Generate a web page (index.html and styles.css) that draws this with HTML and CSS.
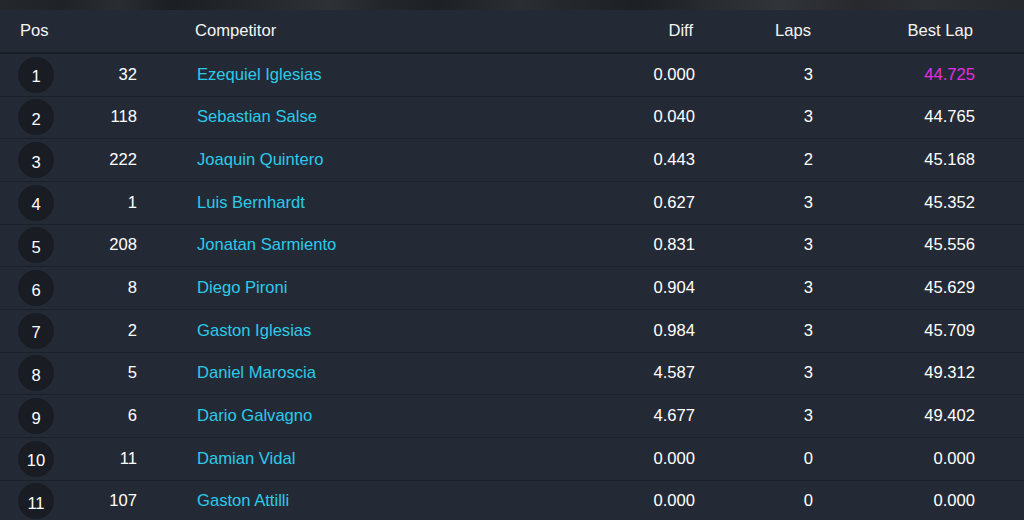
FILE: index.html
```html
<!DOCTYPE html>
<html lang="es">
<head>
<meta charset="utf-8">
<title>Clasificación</title>
<link rel="stylesheet" href="styles.css">
</head>
<body>
<div class="banner"></div>
<div class="board">
  <div class="row head">
    <div class="h-pos">Pos</div>
    <div></div>
    <div class="h-name">Competitor</div>
    <div class="h-r">Diff</div>
    <div class="h-r">Laps</div>
    <div class="h-r">Best Lap</div>
  </div>
  <div class="row"><div class="pos"><span class="badge">1</span></div><div class="num">32</div><div class="name">Ezequiel Iglesias</div><div class="r">0.000</div><div class="r">3</div><div class="r best">44.725</div></div>
  <div class="row"><div class="pos"><span class="badge">2</span></div><div class="num">118</div><div class="name">Sebastian Salse</div><div class="r">0.040</div><div class="r">3</div><div class="r">44.765</div></div>
  <div class="row"><div class="pos"><span class="badge">3</span></div><div class="num">222</div><div class="name">Joaquin Quintero</div><div class="r">0.443</div><div class="r">2</div><div class="r">45.168</div></div>
  <div class="row"><div class="pos"><span class="badge">4</span></div><div class="num">1</div><div class="name">Luis Bernhardt</div><div class="r">0.627</div><div class="r">3</div><div class="r">45.352</div></div>
  <div class="row"><div class="pos"><span class="badge">5</span></div><div class="num">208</div><div class="name">Jonatan Sarmiento</div><div class="r">0.831</div><div class="r">3</div><div class="r">45.556</div></div>
  <div class="row"><div class="pos"><span class="badge">6</span></div><div class="num">8</div><div class="name">Diego Pironi</div><div class="r">0.904</div><div class="r">3</div><div class="r">45.629</div></div>
  <div class="row"><div class="pos"><span class="badge">7</span></div><div class="num">2</div><div class="name">Gaston Iglesias</div><div class="r">0.984</div><div class="r">3</div><div class="r">45.709</div></div>
  <div class="row"><div class="pos"><span class="badge">8</span></div><div class="num">5</div><div class="name">Daniel Maroscia</div><div class="r">4.587</div><div class="r">3</div><div class="r">49.312</div></div>
  <div class="row"><div class="pos"><span class="badge">9</span></div><div class="num">6</div><div class="name">Dario Galvagno</div><div class="r">4.677</div><div class="r">3</div><div class="r">49.402</div></div>
  <div class="row"><div class="pos"><span class="badge">10</span></div><div class="num">11</div><div class="name">Damian Vidal</div><div class="r">0.000</div><div class="r">0</div><div class="r">0.000</div></div>
  <div class="row"><div class="pos"><span class="badge">11</span></div><div class="num">107</div><div class="name">Gaston Attilli</div><div class="r">0.000</div><div class="r">0</div><div class="r">0.000</div></div>
</div>
</body>
</html>
```

FILE: styles.css
```css
html, body {
  margin: 0;
  padding: 0;
  background: #242a35;
  overflow: hidden;
}

body {
  font-family: "Liberation Sans", Arial, sans-serif;
  font-size: 16.6px;
  color: #ffffff;
}

.banner {
  height: 10px;
  background:
    linear-gradient(90deg,
      #24272b 0px, #1f2226 60px, #2a2d31 120px, #1b1e22 170px, #25282c 260px,
      #2e3135 330px, #23262a 380px, #1d2024 440px, #2b2e32 520px, #25282c 560px,
      #1c1f23 640px, #2a2d31 720px, #313438 780px, #27292d 860px, #2c2f33 930px,
      #25282c 1024px);
}

.board {
  display: flex;
  flex-direction: column;
}

.row {
  display: grid;
  grid-template-columns: 60px 77px 1fr 135px 118px 162px;
  padding-right: 49px;
  align-items: center;
  box-sizing: border-box;
  height: 42.67px;
  border-bottom: 1px solid #1b2029;
}

.row.head {
  height: 44px;
  border-bottom: 2px solid #1a1e26;
  color: #f4f4f4;
}

.h-pos {
  padding-left: 20px;
}

.h-name {
  padding-left: 58px;
}

.h-r {
  text-align: right;
  padding-right: 2px;
}

.pos {
  padding-left: 18px;
  display: flex;
  align-items: center;
}

.badge {
  width: 36px;
  height: 36px;
  box-sizing: border-box;
  padding-top: 5px;
  border-radius: 50%;
  background: #191c23;
  display: flex;
  align-items: center;
  justify-content: center;
  color: #ffffff;
}

.num {
  text-align: right;
}

.name {
  padding-left: 60px;
  color: #2acbea;
}

.r {
  text-align: right;
}

.best {
  color: #e22ee2;
}
```
